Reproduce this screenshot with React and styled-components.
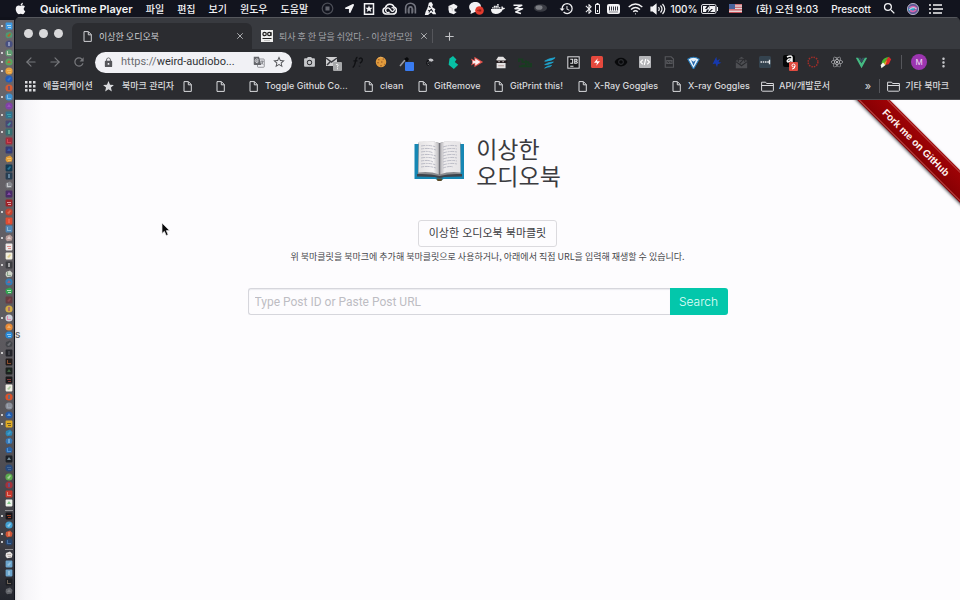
import React from "react";
import styled, { createGlobalStyle, css } from "styled-components";
import { FaApple, FaDocker, FaReact, FaLocationArrow } from "react-icons/fa";
import {
  MdSearch, MdHistory, MdLock, MdStar, MdStarBorder, MdPhotoCamera,
  MdRemoveRedEye, MdBluetooth, MdRefresh, MdMoreVert,
} from "react-icons/md";
import { ArrowLeft, ArrowRight, X, Plus } from "lucide-react";

const GlobalStyle = createGlobalStyle`
  * { box-sizing: border-box; }
  body {
    margin: 0;
    background: #10121b;
    font-family: Inter, "Noto Sans CJK KR", sans-serif;
  }
  button, input { font-family: inherit; margin: 0; }
  button { cursor: pointer; }
  svg { display: block; flex: none; }
`;

/* ---------- desktop ---------- */

const Desktop = styled.div`
  display: flex;
  flex-direction: column;
  min-height: 100vh;
  overflow: hidden;
  position: relative;
`;

const MenuBar = styled.header`
  display: flex;
  align-items: center;
  justify-content: space-between;
  height: 17px;
  padding: 0 12px 0 14px;
  background: #12141e;
  color: #f3f3f5;
`;

const Menus = styled.nav`
  display: flex;
  align-items: center;
  gap: 13px;
`;

const MenuButton = styled.button`
  border: 0;
  padding: 0;
  background: none;
  color: inherit;
  font-size: ${(p) => (p.$app ? "11px" : "10px")};
  font-weight: ${(p) => (p.$app ? 600 : 500)};
  line-height: 16px;
  white-space: nowrap;
`;

const StatusArea = styled.div`
  display: flex;
  align-items: center;
`;

const StatusItem = styled.button`
  display: flex;
  align-items: center;
  justify-content: center;
  width: ${(p) => p.$w}px;
  height: 16px;
  border: 0;
  padding: 0;
  background: none;
  color: #f3f3f5;
  font-size: 10px;
  font-weight: 500;
  white-space: nowrap;
`;

const Workspace = styled.div`
  display: flex;
  flex: 1;
`;

const Dock = styled.aside`
  display: flex;
  flex-direction: column;
  width: 14px;
  margin-top: 3px;
  padding: 2px 0 5px;
  background: linear-gradient(#6b686d 0, #625f64 35%, #58565b 70%, #3c3c43 90%, #24262e);
`;

const DockItem = styled.button`
  display: flex;
  align-items: center;
  flex: 1;
  gap: 2px;
  min-height: 0;
  border: 0;
  padding: 0 0 0 1px;
  background: none;
  &::before {
    content: "";
    width: 2px;
    height: 2px;
    border-radius: 1px;
    background: ${(p) => (p.$running ? "#f0f0f0" : "transparent")};
  }
`;

const DockRule = styled.hr`
  width: 8px;
  height: 1px;
  margin: 2px 1px 1px auto;
  border: 0;
  background: #8d8c90;
`;

/* ---------- browser ---------- */

const Browser = styled.main`
  display: flex;
  flex-direction: column;
  flex: 1;
  min-width: 0;
  margin-left: 1px;
  border-radius: 5px 5px 0 0;
  overflow: hidden;
  background: #2b2c30;
`;

const TabStrip = styled.div`
  display: flex;
  align-items: flex-end;
  height: 32px;
  padding-left: 9px;
  background: #383a3f;
  border-top: 1px solid #55575c;
`;

const Lights = styled.div`
  display: flex;
  align-items: center;
  gap: 6px;
  height: 31px;
  margin-right: 9px;
`;

const Light = styled.button`
  width: 9px;
  height: 9px;
  border: 0;
  padding: 0;
  border-radius: 50%;
  background: #d9d9db;
`;

const Tab = styled.div`
  display: flex;
  align-items: center;
  gap: 6px;
  height: 26px;
  padding: 0 7px 0 9px;
  width: 180px;
  border-radius: 6px 6px 0 0;
  color: #a3a4a9;
  font-family: "Noto Sans CJK KR", sans-serif;
  font-size: 9px;
  white-space: nowrap;
  ${(p) => p.$active && css`
    padding-left: 11px;
    gap: 7px;
    background: #2b2c30;
    color: #d0d1d4;
  `}
`;

const TabTitle = styled.span`
  flex: 1;
`;

const PlainButton = styled.button`
  display: flex;
  align-items: center;
  justify-content: center;
  width: ${(p) => p.$w || 10}px;
  height: ${(p) => p.$h || 10}px;
  flex: none;
  border: 0;
  padding: 0;
  background: none;
  color: ${(p) => p.$color || "#c4c5c8"};
`;

const Rule = styled.span`
  width: 1px;
  height: 14px;
  flex: none;
  background: #55565b;
`;

const NewTab = styled.div`
  display: flex;
  align-items: center;
  gap: 9px;
  height: 26px;
`;

const Toolbar = styled.div`
  display: flex;
  align-items: center;
  height: 26px;
  padding: 0 8px 0 4px;
  > ${Rule} { margin-left: 4px; }
`;

const Omnibox = styled.div`
  display: flex;
  align-items: center;
  flex: 1;
  gap: 7px;
  height: 21px;
  padding: 0 7px 0 8px;
  margin: 0 5px 0 4px;
  border-radius: 11px;
  background: #f1f1f5;
  color: #55565a;
`;

const Address = styled.a`
  flex: 1;
  min-width: 0;
  color: #6a6b70;
  font-family: Roboto, sans-serif;
  font-size: 11px;
  line-height: 20px;
  white-space: nowrap;
  text-decoration: none;
  b { color: #303136; font-weight: 400; }
`;

const Avatar = styled.button`
  width: 16px;
  height: 16px;
  margin: 0 7px 0 9px;
  border: 0;
  padding: 0;
  border-radius: 50%;
  background: #9c35b0;
  color: #f0dcf3;
  font-size: 8px;
`;

const Bookmarks = styled.nav`
  display: flex;
  align-items: center;
  height: 25px;
  padding: 0 11px 2px 10px;
  color: #d9dadd;
  border-bottom: 1px solid #4d4e52;
`;

const Bookmark = styled.a`
  display: flex;
  align-items: center;
  gap: ${(p) => (p.$w ? "7px" : "5px")};
  flex: none;
  width: ${(p) => (p.$w ? `${p.$w}px` : "auto")};
  color: inherit;
  font-size: 9px;
  font-weight: 500;
  line-height: 14px;
  text-decoration: none;
  white-space: nowrap;
  &:last-child { margin-left: 7px; }
`;

const Overflow = styled.button`
  margin: 0 8px 0 auto;
  border: 0;
  padding: 0;
  background: none;
  color: inherit;
  font-size: 11px;
`;

/* ---------- page ---------- */

const Page = styled.section`
  position: relative;
  display: flex;
  flex-direction: column;
  align-items: center;
  flex: 1;
  padding: 37px 16px 0;
  background: linear-gradient(90deg, #dadadd 0, #eeedf0 2px, #f6f5f8 10px, #fdfcfe 28px);
  color: #3b3b3f;
`;

const Brand = styled.div`
  display: flex;
  align-items: flex-start;
  gap: 11px;
  > svg { margin-top: 3px; }
`;

const Title = styled.h1`
  margin: 0;
  font-size: 23px;
  font-weight: 400;
  line-height: 27px;
`;

const Bookmarklet = styled.a`
  margin-top: 29px;
  border: 1px solid #dbdade;
  border-radius: 3px;
  padding: 0 10px;
  color: #3b3b3f;
  font-size: 11px;
  line-height: 25px;
  text-decoration: none;
`;

const Hint = styled.p`
  margin: 3px 0 0;
  color: #47474b;
  font-family: "Noto Sans CJK KR", sans-serif;
  font-size: 9px;
  line-height: 14px;
`;

const SearchForm = styled.form`
  display: flex;
  width: 100%;
  max-width: 480px;
  margin-top: 24px;
`;

const SearchInput = styled.input`
  flex: 1;
  min-width: 0;
  height: 27px;
  border: 1px solid #d6d6dc;
  border-right: 0;
  border-radius: 3px 0 0 3px;
  padding: 0 6px;
  background: #fdfcfe;
  box-shadow: inset 0 1px 1px #ececf0;
  color: #3b3b3f;
  font-family: Roboto, sans-serif;
  font-size: 12px;
  &::placeholder { color: #bdbdc3; opacity: 1; }
`;

const SearchButton = styled.button`
  width: 58px;
  height: 27px;
  border: 0;
  border-radius: 0 3px 3px 0;
  padding: 0;
  background: #03c7ab;
  color: #e5fffa;
  font-size: 12px;
  font-weight: 300;
`;

const RibbonCorner = styled.div`
  position: absolute;
  top: 0;
  right: 0;
  width: 110px;
  height: 110px;
  overflow: hidden;
`;

const Ribbon = styled.a`
  position: absolute;
  top: 31px;
  left: -34px;
  width: 200px;
  padding: 1px 0;
  transform: rotate(45deg);
  background: linear-gradient(#a00306, #860003);
  box-shadow: 0 1px 3px #55555a;
  color: #fff3f1;
  font-family: "Liberation Sans", sans-serif;
  font-size: 10px;
  font-weight: 700;
  line-height: 19px;
  text-align: center;
  text-decoration: none;
  span {
    display: block;
    border: 1px solid #ba4d4a;
    border-width: 1px 0;
  }
`;

const StrayLetter = styled.span`
  position: absolute;
  left: 0;
  top: 227px;
  color: #606064;
  font-size: 10px;
  font-weight: 500;
  line-height: 14px;
`;

const Pointer = styled.svg`
  position: absolute;
  left: 161px;
  top: 222px;
`;

/* ---------- drawings ---------- */

const Svg = ({ w = 13, h = w, box = 16, children }) => (
  <svg width={w} height={h} viewBox={`0 0 ${box} ${box}`} fill="none" aria-hidden="true">{children}</svg>
);

const FileIcon = () => (
  <svg width="9" height="11" viewBox="0 0 9 11" fill="none" stroke="currentColor" aria-hidden="true">
    <path d="M1 .6h4.4L8.3 3.5v6.9H1zM5.3.8v3h3" />
  </svg>
);
const FolderIcon = () => (
  <svg width="13" height="11" viewBox="0 0 13 11" fill="none" stroke="currentColor" aria-hidden="true">
    <path d="M.6 9.4V1.2h4l1 1.3h6.8v6.9a.8.8 0 0 1-.8.8H1.400a.8.8 0 0 1-.8-.8zM.6 4.500h11.800" />
  </svg>
);
const GridIcon = () => (
  <svg width="11" height="11" viewBox="0 0 11 11" fill="currentColor" aria-hidden="true">
    {[0, 4, 8].map((y) => [0, 4, 8].map((x) => <rect key={`${x}${y}`} x={x} y={y} width="2.500" height="2.500" />))}
  </svg>
);
const StarIcon = () => <MdStar size={13} />;
const TranslateIcon = () => (
  <Svg w={12}>
    <rect x="6" y="4" width="9" height="11" rx="1" stroke="#77787d" />
    <path d="M1 1h7l3 11H2a1 1 0 0 1-1-1z" fill="#66676c" />
    <path d="M7.500 5.500H5v2h1.500M7 4.500a2.500 2.500 0 1 0 .5 3" stroke="#f1f1f5" />
    <path d="M10 7h4M12 6v1M13.500 7c-.5 2-1.500 3-2.500 4M11 8.500l2.500 3" stroke="#66676c" />
  </Svg>
);
const Favicon = () => (
  <svg width="12" height="12" viewBox="0 0 12 12" fill="none" aria-hidden="true">
    <rect width="12" height="12" fill="#eee" />
    <circle cx="3.600" cy="4" r="1.700" stroke="#222" strokeWidth="1.200" />
    <circle cx="8.300" cy="4" r="1.700" stroke="#222" strokeWidth="1.200" />
    <path d="M10 2v4M1.500 8.500h9" stroke="#222" />
    <path d="M3 10.500h6" stroke="#aaa" strokeWidth=".6" />
  </svg>
);

const BookIcon = () => (
  <svg width="51" height="42" viewBox="0 0 51 42" aria-hidden="true">
    <defs>
      <linearGradient id="leftPage" x1="0" x2="1">
        <stop offset="0" stopColor="#e4e2e3" /><stop offset=".7" stopColor="#f5f3f4" /><stop offset="1" stopColor="#b5b4b7" />
      </linearGradient>
      <linearGradient id="rightPage" x1="0" x2="1">
        <stop offset="0" stopColor="#aaa9ad" /><stop offset=".25" stopColor="#eeecee" /><stop offset="1" stopColor="#e6e4e6" />
      </linearGradient>
    </defs>
    <path d="M.5 4h49.500v35H29.500q-3.500 3-8 0H.5z" fill="#1687b4" />
    <path d="M3 34h45v2.500l-18 .4q-4.500 2-9 0l-18-.4z" fill="#3f444b" />
    <path d="M4.500 2.500Q17 .5 25.500 3 34 .5 46.500 2.500V34Q35 33.500 25.500 36 16 33.500 4 34z" fill="#898a8e" />
    <path d="M5 1.500Q19 0 25.500 3.500v31Q16 31 4.500 32.500z" fill="url(#leftPage)" />
    <path d="M46 1.500Q32 0 25.500 3.500v31Q35 31 46.500 32.500z" fill="url(#rightPage)" />
    <path d="M25.500 3v32" stroke="#737379" strokeWidth="1.400" />
    <path d="M22.500 38.500h6l-1 2.500h-4z" fill="#5c4a25" />
    {[6, 9, 12, 15, 18, 21, 24, 27].map((y, i) => (
      <path
        key={y}
        d={`M7 ${y}q8-1.500 ${i % 3 === 2 ? 12 : 15} 1M29 ${y + 1}q7-2.500 ${i === 7 ? 10 : 14}-1`}
        fill="none"
        stroke="#b0b1bd"
        strokeWidth=".8"
        strokeDasharray={i % 2 ? "3 .7 5 .7" : "4 .7 2 .7"}
      />
    ))}
  </svg>
);

/* ---------- menu bar data ---------- */

const statusItems = [
  ["녹화 중지", 23, <Svg><circle cx="8" cy="8" r="6.500" stroke="#4b4d56" strokeWidth="1.500" /><rect x="5.500" y="5.500" width="5" height="5" fill="#62646d" /></Svg>],
  ["위치", 20, <FaLocationArrow size={9} />],
  ["즐겨찾기", 20, <Svg w={12}><rect x="2" y="1" width="12" height="14" stroke="#f3f3f5" strokeWidth="2" /><path d="m8 3 1.300 3.200 3.400.2-2.600 2.200.9 3.400-3-1.900L5 12l.9-3.400-2.600-2.200 3.400-.2z" fill="#f3f3f5" /></Svg>],
  ["Creative Cloud", 21, <svg width="15" height="12" viewBox="0 0 15 12" fill="none" stroke="#f3f3f5" strokeWidth="1.600"><path d="M4 11a3.200 3.200 0 0 1-.5-6.300A4.500 4.500 0 0 1 12 4a3.600 3.600 0 0 1-1 7z" /><path d="M7.500 9a2.300 2.300 0 1 1 0-3.500l2 2.500a1.800 1.800 0 1 0 0-3" strokeWidth="1.300" /></svg>],
  ["Arc", 20, <Svg><path d="M2 14V7.500a6 6 0 0 1 12 0V14M6 14V8a2 2 0 0 1 4 0v6" stroke="#747680" strokeWidth="2" /><path d="M4 13V8M12 13V8" stroke="#4a4c56" /></Svg>],
  ["로켓", 21, <Svg><path d="M6 1 9 0l2 3-1 3 4 3-1 2 2 4h-4l-2-2-2 1-2 2H1l1-4 2-4 1-3z" fill="#f3f3f5" /><path d="m6 5 2 2M5 10l2 1 2-2 2 3M6 13l1-2" stroke="#12141e" strokeWidth="1.300" /></Svg>],
  ["큐브", 24, <Svg w={12}><path d="m2 4 7-3 5 3-1 3-3 1v3l3 1-4 3-6-2-1-4z" fill="#f3f3f5" /><path d="m3 5 4 2v4" stroke="#aaa" strokeWidth=".7" /></Svg>],
  ["카카오톡", 22, <svg width="15" height="13" viewBox="0 0 15 13"><path d="M6 0c4 0 6 2 6 5s-2 5-6 5L1.500 12 2 9C-2 5 1 0 6 0" fill="#f3f3f5" /><circle cx="10.500" cy="8.500" r="4.300" fill="#e33b2e" /><path d="M8.500 8.500h.8m.9-1v2m1.500-2v2" stroke="#741815" /></svg>],
  ["Docker", 21, <FaDocker size={14} />],
  ["Zeplin", 20, <Svg w={12}><path d="M2 3h11L4 7.500h10L5 12l7 2" stroke="#f3f3f5" strokeWidth="2" strokeLinejoin="round" /></Svg>],
  ["원반", 24, <svg width="13" height="9" viewBox="0 0 13 9"><ellipse cx="6.500" cy="4" rx="6.500" ry="3.800" fill="#393b43" /><ellipse cx="5" cy="3.500" rx="3.500" ry="2.300" fill="#7c7e84" /></svg>],
  ["Time Machine", 28, <MdHistory size={15} />],
  ["Bluetooth", 22, <><MdBluetooth size={12} /><svg width="5" height="11" viewBox="0 0 5 11" fill="none" stroke="currentColor"><path d="M.5 1.500h4v9h-4zM1.500.5h2M2.500 7v2" /></svg></>],
  ["메모리", 22, <svg width="13" height="10" viewBox="0 0 13 10"><rect width="13" height="10" rx="2" fill="#f3f3f5" /><path d="M2.500 2.500v4m2-4v4m2-4v4m2-4v4m2-4v4" stroke="#343640" /><path d="M2 8h9" stroke="#85868d" /></svg>],
  ["Wi-Fi", 22, <svg width="15" height="12" viewBox="0 0 15 12" fill="none" stroke="#f3f3f5" strokeWidth="1.400"><path d="M.7 4q6.800-6 13.600 0M3 6.500q4.500-4 9 0M5.200 8.800q2.300-2 4.600 0" /><circle cx="7.500" cy="10.800" r=".6" fill="#f3f3f5" stroke="none" /></svg>],
  ["음량", 24, <svg width="16" height="12" viewBox="0 0 16 12" fill="none" stroke="#f3f3f5" strokeWidth="1.200"><path d="M1 4h2l3-2.500v9L3 8H1z" fill="#f3f3f5" /><path d="M8.500 4q1.500 2 0 4M10.500 2.500q3 3.500 0 7M12.500 1q4.500 5 0 10" /></svg>],
  ["배터리 잔량", 28, "100%"],
  ["배터리", 24, <svg width="18" height="10" viewBox="0 0 18 10" fill="none"><rect x=".5" y=".5" width="14.500" height="9" rx="1.500" stroke="#dcdce0" /><path d="M2 2h4L4 5h2L5 8H2zM9 2h5v6H9l3-3H9z" fill="#f3f3f5" /><path d="M9 1 5.500 5.500H8L6.500 9 11 4.500H8.500z" fill="#f3f3f5" /><path d="M16 3v4h1V3z" fill="#f3f3f5" /></svg>],
  ["입력 소스", 26, <svg width="13" height="9" viewBox="0 0 13 9"><rect width="13" height="9" fill="#e4d5d7" /><path d="M0 .7h13M0 3.300h13M0 5.900h13M0 8.500h13" stroke="#c8525a" strokeWidth="1.100" /><rect width="6" height="5" fill="#49639c" /></svg>],
  ["시계", 78, "(화) 오전 9:03"],
  ["사용자", 50, "Prescott"],
  ["Spotlight", 26, <MdSearch size={15} />],
  ["Siri", 22, <Svg w={12}><circle cx="8" cy="8" r="7.500" fill="#625996" stroke="#d5d4e1" /><circle cx="6" cy="8" r="4" fill="#2ba5c7" /><path d="M3 7q5-5 10 0M4 10q5 3 8-1" stroke="#dc5faa" strokeWidth="2" /><path d="M3 9q5-5 10-1" stroke="#fff" /></Svg>],
  ["알림 센터", 24, <svg width="14" height="10" viewBox="0 0 14 10" stroke="#f3f3f5" strokeWidth="1.600"><path d="M0 1h2M0 5h2M0 9h2M4 1h9M4 5h10M4 9h9" /></svg>],
];

/* ---------- extension data ---------- */

const extensions = [
  ["카메라", <MdPhotoCamera size={13} color="#c6c7ca" />],
  ["메일 확인", <svg width="17" height="17" viewBox="0 0 17 17" fill="none"><rect x="1" y="3" width="11" height="9" fill="#cfcfd1" /><path d="m1 4 5.500 4L12 4M2 11l3-3" stroke="#3a3b40" strokeWidth="1.500" /><rect x="8" y="8" width="9" height="9" rx="1" fill="#a7a8aa" /><path d="M11 11c1-2 3 0 1.500 1.500v.8m0 1v1" stroke="#fff" /></svg>],
  ["함수", <Svg><path d="M8 2C5 1 6 13 2 14M3 6h5M10 4c1-3 6-1 3 3l-2 2m-.5 3v1" stroke="#101114" strokeWidth="1.800" /></Svg>],
  ["쿠키", <Svg w={12}><circle cx="8" cy="8" r="7" fill="#e09a3c" /><path d="M4 5h2m4-1h2M3 9h2m3-1h2m2 3h1m-6 2h2" stroke="#8f5220" strokeWidth="1.500" /><path d="M4 3q4-3 7 0" stroke="#eab56b" /></Svg>],
  ["색상 추출", <svg width="17" height="17" viewBox="0 0 17 17"><path d="m3 12 5-6" stroke="#9a9ba0" strokeWidth="1.500" /><path d="m7 5 3-2 2 2-2 3z" fill="#08090b" /><rect x="8" y="8" width="9" height="9" rx="1" fill="#397bef" /></svg>],
  ["새", <Svg w={11}><path d="M6 5c0-4 7-4 8 0l-3 2-2-1-3 1z" fill="#c5c5c8" /><path d="m4 5 3-1 1 3-2 2 3 2v2H6l-3-3z" fill="#111216" /><path d="m5 8 2-1M5 10l3 2" stroke="#8f9094" /></Svg>],
  ["Bulma", <Svg w={14}><path d="m8 1 4 4-2 3 4 3-5 5-6-5 1-7z" fill="#07bfa4" /></Svg>],
  ["방향", <Svg w={14}><path d="m1 4 4 2V2l10 6-10 6v-4l-4 2 2-4z" fill="#e4514a" /><path d="m3 6 3 1V4l6 4-6 4V9l-3 1z" fill="#fbeeee" /></Svg>],
  ["비밀 요원", <Svg w={13}><path d="M2 4 4 1h6l3 3v11H2z" fill="#e4e2e2" /><path d="M1 7h14" stroke="#231c1e" strokeWidth="3" /><path d="M4 7h2m3 0h2" stroke="#e8d8d6" /><path d="M4 12h7" stroke="#a88783" /></Svg>],
  ["초록 파형", <Svg w={14}><path d="M1 8V5h4v3h4V6m-8 7h14v-3h-3V8H9v4H4" stroke="#183c20" strokeWidth="2" /></Svg>],
  ["깃털", <Svg w={14}><path d="M3 7q4-3 12-4-2 3-10 4zM3 11q4-3 10-3-2 2-8 3zM3 15q3-3 8-3-2 2-5 2z" fill="#20a7d2" stroke="#20a7d2" strokeWidth=".8" /></Svg>],
  ["JetBrains", <Svg><rect x="1" y="1" width="14" height="14" fill="#17181b" stroke="#d9d9dc" strokeWidth="1.300" /><path d="M4 4h3v5H4M9.500 3.500v6m0-5.500h2q2 1 0 2.500h-2 2q2.500 2 0 2.500h-2M4 12.500h4" stroke="#e6e6e8" strokeWidth="1.300" /></Svg>],
  ["번개", <Svg w={12}><rect width="16" height="16" rx="2" fill="#e5493d" /><path d="m9 3-5 6h4l-1 4 5-6H8z" fill="#fff" /></Svg>],
  ["보기", <MdRemoveRedEye size={14} color="#08090b" />],
  ["소스 코드", <Svg w={12}><rect width="16" height="16" rx="1" fill="#b4b5b8" /><path d="m5 5-3 3 3 3m6-6 3 3-3 3M9 4l-2 8" stroke="#fff" strokeWidth="1.500" /></Svg>],
  ["문서", <Svg w={12}><path d="M3 1h8l3 3v11H3zM5 6h7v4H5z" stroke="#55565a" strokeWidth="1.500" /><path d="m6 9 2-2 1 2 2-2" stroke="#68696d" /></Svg>],
  ["다이아몬드", <Svg><path d="M1 4q7-5 14 0L8 16z" fill="#e7f2fa" stroke="#2779b8" strokeWidth="1.400" /><path d="m5 5 3 7 3-7-3 2z" fill="#286aae" /></Svg>],
  ["파란 별", <Svg w={12}><path d="m7 1 1 5 4-2-2 4 4 1-5 2-1 4-2-5-4 1 2-4z" fill="#1639ae" /></Svg>],
  ["열린 메일", <Svg w={13}><path d="m1 6 7-5 7 5v9H1z" fill="#4d4e52" /><path d="M4 7V4h8v3M1 7l7 5 7-5M6 9l5-5" stroke="#292a2e" strokeWidth="1.300" /></Svg>],
  ["비밀번호", <Svg w={12}><rect width="16" height="16" rx="2" fill="#34434f" /><path d="M2 8h2m1 0h2m1 0h2m1 0h2M14 5v6" stroke="#e3e5e8" strokeWidth="1.800" /></Svg>],
  ["쇼핑", <svg width="18" height="18" viewBox="0 0 18 18" fill="none"><rect x="3" y="2" width="12" height="12" rx="2" fill="#050607" /><path d="M7 4q4-2 5 0v5M12 6H9Q6 8 8 9l4-2" stroke="#f5f5f5" strokeWidth="1.500" /><rect x="9" y="9" width="9" height="9" rx="1" fill="#df4b40" /><circle cx="13.500" cy="12.500" r="1.500" stroke="#fff" /><path d="M15 13q0 3-3 3" stroke="#fff" /></svg>],
  ["톱니바퀴", <Svg w={12}><circle cx="8" cy="8" r="6.500" stroke="#a32d28" strokeWidth="2" strokeDasharray="2 1.400" /></Svg>],
  ["React", <FaReact size={12} color="#c6c7ca" />],
  ["Vue", <Svg><path d="M1 2h3l4 7 4-7h3L8 15z" fill="#45ba82" /><path d="M4 2h3l1 2 1-2h3L8 9z" fill="#344c59" /></Svg>],
  ["앵무새", <Svg><path d="M3 9Q4 2 13 1l-4 5-3 6z" fill="#48b72f" /><path d="m8 6 4-5 3 3-3 6-5 1z" fill="#db2a2b" /><path d="m2 11 3-3 3 3-5 4z" fill="#f6f3e8" /><path d="m6 9 4-4-2 6z" fill="#dbaf25" /></Svg>],
];

/* ---------- dock data: running flag, outline, base, accent ---------- */

const dockMain = `1s3d9be5e8f5f2|0r4e9873df4d09e|0c474f80a7b0d4|1c5f9d72efe4d8|1c5aa35ee74736|1ce8a13df4c36a|0c235cb83b85dc|0cd55c3447538e|1c3d91d197cbee|0c8142a7a45cc1|1s31738f3cb5b0|0s46497549b6ad|1s366d7070bca4|0sa32c3be3505a|0s343b763c65b7|0re29d37f7ca77|0s123a52318eb1|0s263d51789bb7|0r86888ee0e1e2|0s492b69a15ac2|0s9e2228f2dada|1cc6422fe78061|0sde4c32ec6d55|0s5186b5a8c9dd|1rb89d9ae9dedb|0seee9e8d66560|0sf1eedfdbc36b|1s3c3d41cccccd|0rced4ca739375|0c347eb7d2505a|0r31a752e8f5e9|0s673c42995154|0cd3ab479a5878|1ccdd0dae7719a|0ce68a37f4c184|0c298ad8c0e3f5|0r424449808288|1s23242a4a4c53|0s211b1ab46034|0s1b211e48764d|0s19191bac4341|0sf0eee593bc87|0cd9532b3679a5|0c8b8f999fa7b5|1c235ba982b8ed|1se1ac25453d2a|0r2a86b553aad4|0r3578b980b9e1|0r2862a75ba3df|0s1b20279ab6c3|0c274a7e5777a0|0c5ca94ec8e2bd|0ca6323b4e60a4|0sc9372ce7b2a4|0sedf2eb55b862`;
const dockRecent = `1s17151ad0532c|0c419fd1b5def1|1rd25638ec9b70|1c26446c5584bf`;
const dockFiles = `0re7e3e1a99b95|0s6ba4cca6cfe4|0s6ba4cca6cfe4|0s1c1e238f7e6d|0r61636985878d`;

const parseDock = (source) =>
  source.split("|").map((s) => ({ running: s[0] === "1", shape: s[1], base: `#${s.slice(2, 8)}`, accent: `#${s.slice(8, 14)}` }));

const markShapes = ["M2 3h4v1H2zm1 2h3v1H3z", "m2 5 3-3 1 1-2 3z", "M3 2h2v4H3z", "M2 2h1v3h3v1H2z", "M4 2 6 5H2z"];

const DockGroup = ({ source }) =>
  parseDock(source).map((it, i) => (
    <DockItem key={i} type="button" $running={it.running} aria-label={`Dock ${i + 1}`}>
      <svg width="8" height="8" viewBox="0 0 8 8" aria-hidden="true">
        {it.shape === "c" && <circle cx="4" cy="4" r="3.600" fill={it.base} />}
        {it.shape === "s" && <rect x=".6" y=".6" width="6.800" height="6.800" rx=".8" fill={it.base} />}
        {it.shape === "r" && <path d="M1 2 5 .5 7.500 3 6.800 6.500 2 7.200.5 5z" fill={it.base} />}
        <path d={markShapes[i % markShapes.length]} fill={it.accent} fillOpacity=".7" />
      </svg>
    </DockItem>
  ));

const bookmarks = [
  [GridIcon, 77, "애플리케이션"],
  [StarIcon, 81, "북마크 관리자"],
  [FileIcon, 33, ""],
  [FileIcon, 33, ""],
  [FileIcon, 115, "Toggle Github Co..."],
  [FileIcon, 54, "clean"],
  [FileIcon, 76, "GitRemove"],
  [FileIcon, 84, "GitPrint this!"],
  [FileIcon, 94, "X-Ray Goggles"],
  [FileIcon, 89, "X-ray Goggles"],
  [FolderIcon, 0, "API/개발문서"],
];

export default function App() {
  return (
    <Desktop>
      <GlobalStyle />
      <MenuBar>
        <Menus>
          <MenuButton type="button" aria-label="Apple"><FaApple size={13} /></MenuButton>
          <MenuButton type="button" $app>QuickTime Player</MenuButton>
          {["파일", "편집", "보기", "윈도우", "도움말"].map((m) => <MenuButton key={m} type="button">{m}</MenuButton>)}
        </Menus>
        <StatusArea>
          {statusItems.map(([label, w, body]) => (
            <StatusItem key={label} type="button" $w={w} aria-label={typeof body === "string" ? undefined : label}>{body}</StatusItem>
          ))}
        </StatusArea>
      </MenuBar>

      <Workspace>
        <Dock aria-label="Dock">
          <DockGroup source={dockMain} />
          <DockRule />
          <DockGroup source={dockRecent} />
          <DockRule />
          <DockGroup source={dockFiles} />
        </Dock>

        <Browser>
          <TabStrip>
            <Lights>
              <Light type="button" aria-label="닫기" />
              <Light type="button" aria-label="최소화" />
              <Light type="button" aria-label="확대" />
            </Lights>
            <Tab $active>
              <FileIcon />
              <TabTitle>이상한 오디오북</TabTitle>
              <PlainButton type="button" aria-label="탭 닫기"><X size={10} /></PlainButton>
            </Tab>
            <Tab>
              <Favicon />
              <TabTitle>퇴사 후 한 달을 쉬었다. - 이상한모임</TabTitle>
              <PlainButton type="button" aria-label="탭 닫기"><X size={10} /></PlainButton>
            </Tab>
            <NewTab>
              <Rule />
              <PlainButton type="button" $w={14} aria-label="새 탭"><Plus size={13} /></PlainButton>
            </NewTab>
          </TabStrip>

          <Toolbar>
            <PlainButton type="button" $w={24} $h={20} $color="#77787c" aria-label="뒤로"><ArrowLeft size={14} strokeWidth={2} /></PlainButton>
            <PlainButton type="button" $w={24} $h={20} $color="#77787c" aria-label="앞으로"><ArrowRight size={14} strokeWidth={2} /></PlainButton>
            <PlainButton type="button" $w={24} $h={20} $color="#77787c" aria-label="새로고침"><MdRefresh size={14} /></PlainButton>
            <Omnibox>
              <MdLock size={11} />
              <Address href="https://weird-audiobook">https://<b>weird-audiobo...</b></Address>
              <PlainButton type="button" $w={14} aria-label="번역"><TranslateIcon /></PlainButton>
              <PlainButton type="button" $w={12} $color="#55565a" aria-label="북마크 추가"><MdStarBorder size={14} /></PlainButton>
            </Omnibox>
            {extensions.map(([label, body]) => (
              <PlainButton key={label} type="button" $w={24} $h={20} aria-label={label}>{body}</PlainButton>
            ))}
            <Rule />
            <Avatar type="button">M</Avatar>
            <PlainButton type="button" $w={18} $h={20} aria-label="메뉴"><MdMoreVert size={15} /></PlainButton>
          </Toolbar>

          <Bookmarks>
            {bookmarks.map(([Icon, w, label], i) => (
              <Bookmark key={i} href="#bookmark" $w={w} aria-label={label || "이름 없는 북마크"}>
                <Icon />
                {label && <span>{label}</span>}
              </Bookmark>
            ))}
            <Overflow type="button" aria-label="더 보기">»</Overflow>
            <Rule />
            <Bookmark href="#others"><FolderIcon /><span>기타 북마크</span></Bookmark>
          </Bookmarks>

          <Page>
            <StrayLetter>s</StrayLetter>
            <Brand>
              <BookIcon />
              <Title>이상한<br />오디오북</Title>
            </Brand>
            <Bookmarklet href="#bookmarklet">이상한 오디오북 북마클릿</Bookmarklet>
            <Hint>위 북마클릿을 북마크에 추가해 북마클릿으로 사용하거나, 아래에서 직접 URL을 입력해 재생할 수 있습니다.</Hint>
            <SearchForm onSubmit={(e) => e.preventDefault()}>
              <SearchInput type="text" aria-label="Post ID or URL" placeholder="Type Post ID or Paste Post URL" />
              <SearchButton type="submit">Search</SearchButton>
            </SearchForm>
            <RibbonCorner>
              <Ribbon href="https://github.com"><span>Fork me on GitHub</span></Ribbon>
            </RibbonCorner>
          </Page>
        </Browser>
      </Workspace>

      <Pointer width="9" height="15" viewBox="0 0 9 15" aria-hidden="true">
        <path d="M1 1v10.500l2.400-2.200 1.800 4.200 1.900-.8-1.800-4.100h3.200z" fill="#08080a" stroke="#e8e8ea" strokeWidth=".7" />
      </Pointer>
    </Desktop>
  );
}
